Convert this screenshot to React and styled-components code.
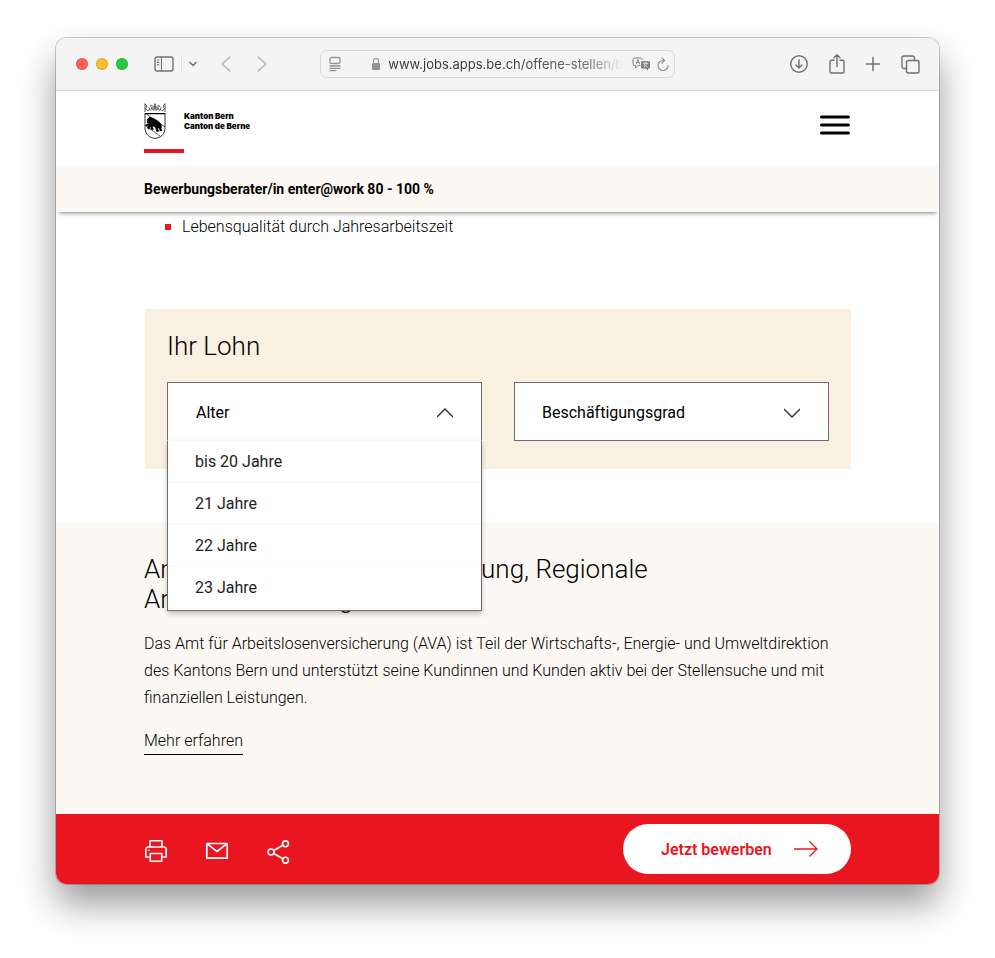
import React, { useState } from 'react'
import styled, { createGlobalStyle, css } from 'styled-components'

const GlobalStyle = createGlobalStyle`
  * {
    box-sizing: border-box;
  }

  body {
    margin: 0;
    background: #fff;
    color: #000;
    font-family: Roboto, "Liberation Sans", sans-serif;
    font-size: 16px;
  }

  button, select {
    font: inherit;
    color: inherit;
  }
`

const Desktop = styled.div`
  min-height: 100vh;
  padding: 38px 56px 74px;
`

const Window = styled.div`
  display: flex;
  flex-direction: column;
  min-height: calc(100vh - 112px);
  border-radius: 11px;
  overflow: hidden;
  background: #fff;
  box-shadow: 0 0 0 1px rgba(0, 0, 0, 0.2), 0 20px 36px rgba(0, 0, 0, 0.4);
`

const Toolbar = styled.div`
  display: flex;
  align-items: center;
  justify-content: space-between;
  height: 53px;
  padding: 0 19px 0 20px;
  background: #f4f4f4;
  border-bottom: 1px solid #d6d6d6;
  color: #707070;
`

const ToolGroup = styled.div`
  display: flex;
  align-items: center;
  gap: ${props => props.$gap}px;
`

const NavGroup = styled(ToolGroup)`
  margin-right: 30px;
`

const ActionGroup = styled(ToolGroup)`
  margin-left: 90px;
`

const Light = styled.button`
  width: 12px;
  height: 12px;
  padding: 0;
  border: 1px solid rgba(0, 0, 0, 0.12);
  border-radius: 50%;
  background: ${props => props.$color};
`

const IconButton = styled.button`
  display: flex;
  padding: 0;
  border: 0;
  background: none;
  color: ${props => props.$color || 'inherit'};
  cursor: pointer;

  svg {
    overflow: visible;
    fill: none;
    stroke: currentColor;
    stroke-linecap: round;
    stroke-linejoin: round;
  }
`

const SidebarButton = styled(IconButton)`
  margin-left: 18px;
`

const Divider = styled.span`
  width: 1px;
  height: 18px;
  background: #dedede;
`

const AddressBar = styled.div`
  display: flex;
  align-items: center;
  width: 355px;
  height: 28px;
  padding: 0 5px 0 8px;
  border: 1px solid #d8d8d8;
  border-radius: 7px;
  color: #939393;
`

const Lock = styled.svg`
  margin: 0 7px 0 30px;
  flex: none;
`

const Address = styled.input`
  flex: 1;
  min-width: 0;
  margin-right: 8px;
  padding: 0;
  border: 0;
  outline: 0;
  background: none;
  color: #3c3c3c;
  font: 13px Inter, "Liberation Sans", sans-serif;
  mask-image: linear-gradient(90deg, #000 50%, rgba(0, 0, 0, 0.7) 85%, transparent);
`

const SiteHeader = styled.header`
  display: flex;
  align-items: flex-start;
  justify-content: space-between;
  height: 75px;
  padding: 12px 88px 0;
`

const Brand = styled.a`
  display: flex;
  color: #000;
  text-decoration: none;
`

const Crest = styled.span`
  width: 40px;
  height: 50px;
  border-bottom: 4px solid #ea161f;
`

const BrandName = styled.span`
  padding-top: 8px;
  font: 900 8px/10px Inter, "Liberation Sans", sans-serif;
`

const MenuButton = styled(IconButton)`
  padding-top: 11px;
`

const JobBar = styled.div`
  position: relative;
  height: 46px;
  padding: 0 88px;
  background: #fcf8f3;
  box-shadow: 0 4px 4px -3px rgba(0, 0, 0, 0.5);
  font-size: 14px;
  font-weight: 700;
  line-height: 46px;
`

const Content = styled.main`
  flex: 1;
  display: flex;
  flex-direction: column;
`

const Benefits = styled.ul`
  margin: 0;
  padding: 1px 88px 0 109px;
  list-style: none;
  font-weight: 300;
  line-height: 27px;
`

const Benefit = styled.li`
  display: flex;
  align-items: center;
  gap: 11px;

  &::before {
    content: "";
    width: 6px;
    height: 6px;
    background: #ea161f;
  }
`

const Salary = styled.section`
  margin: 69px 88px 54px 89px;
  padding: 22px 22px 28px;
  background: #faf0e2;
`

const Heading = styled.h2`
  margin: 0;
  font-size: 26px;
  font-weight: 300;
  line-height: 30px;
`

const Fields = styled.div`
  display: grid;
  grid-template-columns: 1fr 1fr;
  gap: 32px;
  margin-top: 21px;
`

const Field = styled.div`
  position: relative;
  height: 59px;
`

const fieldControl = css`
  width: 100%;
  height: 59px;
  border: 1px solid #6d6d6d;
  border-radius: 0;
  background: #fff;
  font-weight: 400;
  text-align: left;
`

const Select = styled.select`
  ${fieldControl}
  appearance: none;
  padding: 2px 27px 0;
`

const Toggle = styled.button`
  ${fieldControl}
  padding: 2px 28px 0;
`

const Chevron = styled.svg`
  position: absolute;
  top: 25px;
  right: 29px;
  fill: none;
  stroke: #333;
  stroke-width: 1.4;
  pointer-events: none;
  transform: ${props => (props.$up ? 'rotate(180deg)' : 'none')};
`

const Options = styled.ul`
  position: absolute;
  z-index: 2;
  top: 58px;
  left: 0;
  right: 0;
  margin: 0;
  padding: 0 0 1px;
  list-style: none;
  background: #fff;
  border: 1px solid #6d6d6d;
  border-top-color: #f7f7f7;
  box-shadow: 0 3px 5px rgba(0, 0, 0, 0.22);
`

const Option = styled.li`
  height: 42px;
  padding: 0 27px;
  border-bottom: 1px solid #f7f7f7;
  color: #222;
  line-height: 42px;
`

const Office = styled.section`
  flex: 1;
  padding: 31px 88px;
  background: #fcf8f3;
`

const OfficeText = styled.p`
  margin: 16px 0;
  font-weight: 300;
  line-height: 27px;
`

const MoreLink = styled.a`
  display: inline-block;
  border-bottom: 1px solid #000;
  color: #000;
  font-weight: 300;
  line-height: 27px;
  text-decoration: none;
`

const ActionBar = styled.footer`
  display: flex;
  align-items: center;
  justify-content: space-between;
  height: 70px;
  padding: 0 88px;
  background: #ea161f;
  color: #fff;
`

const ShareTools = styled.div`
  display: flex;
  align-items: center;
  gap: 37px;
  padding-top: 4px;
`

const Apply = styled.a`
  display: flex;
  align-items: center;
  justify-content: space-between;
  width: 228px;
  height: 50px;
  padding: 0 32px 0 38px;
  border-radius: 25px;
  background: #fff;
  color: #ea161f;
  font-weight: 600;
  text-decoration: none;
`

const ages = ['bis 20 Jahre', '21 Jahre', '22 Jahre', '23 Jahre']

function BrowserToolbar() {
  return (
    <Toolbar>
      <ToolGroup $gap={8}>
        <Light $color="#ff5f57" aria-label="Schliessen" />
        <Light $color="#febc2e" aria-label="Minimieren" />
        <Light $color="#28c840" aria-label="Vergrössern" />
        <ToolGroup $gap={7}>
          <SidebarButton aria-label="Seitenleiste">
            <svg width="20" height="16" viewBox="0 0 20 16" strokeWidth="1.4">
              <rect x="1" y="1" width="18" height="14" rx="2" />
              <path d="M7.5 1v14M3.3 4h1.6M3.3 6.4h1.6M3.3 8.8h1.6" strokeWidth="1.1" />
            </svg>
          </SidebarButton>
          <Divider />
          <IconButton aria-label="Tabgruppen">
            <svg width="8" height="6" viewBox="0 0 8 6" strokeWidth="1.5"><path d="M1 1.5l3 3 3-3" /></svg>
          </IconButton>
        </ToolGroup>
      </ToolGroup>
      <NavGroup $gap={26}>
        <IconButton $color="#b3b3b3" aria-label="Zurück">
          <svg width="10" height="16" viewBox="0 0 10 16" strokeWidth="1.5"><path d="M9 1L1 8l8 7" /></svg>
        </IconButton>
        <IconButton $color="#b3b3b3" aria-label="Vorwärts">
          <svg width="10" height="16" viewBox="0 0 10 16" strokeWidth="1.5"><path d="M1 1l8 7-8 7" /></svg>
        </IconButton>
      </NavGroup>
      <AddressBar>
        <IconButton aria-label="Reader">
          <svg width="12" height="16" viewBox="0 0 12 16" strokeWidth="1.3">
            <rect x="1" y="1.5" width="10" height="6" rx="1.5" />
            <path d="M1 10h10M1 12.3h10M1 14.6h6" />
          </svg>
        </IconButton>
        <Lock width="10" height="14" viewBox="0 0 10 14">
          <path d="M2.5 7V4a2.5 2.5 0 0 1 5 0v3" fill="none" stroke="currentColor" strokeWidth="1.2" />
          <rect x="1" y="6" width="8" height="7" rx="1.2" fill="currentColor" />
        </Lock>
        <Address aria-label="Adresse" readOnly value="www.jobs.apps.be.ch/offene-stellen/bewerbungsberater" />
        <ToolGroup $gap={6}>
          <IconButton $color="#808080" aria-label="Übersetzen">
            <svg width="19" height="14" viewBox="0 0 19 14">
              <path d="M8 8.6H5.8L3.4 11V8.6H3A2 2 0 0 1 1 6.6V3a2 2 0 0 1 2-2h5.5a2 2 0 0 1 1.9 1.6" strokeWidth="1" />
              <path d="M4 7l1.9-4.6L7.6 7M4.6 5.6h2.5" strokeWidth="0.9" />
              <path d="M10.5 4h6A1.5 1.5 0 0 1 18 5.5V10a1.5 1.5 0 0 1-1.5 1.5H16v2l-2.2-2h-3.3A1.5 1.5 0 0 1 9 10V5.5A1.5 1.5 0 0 1 10.5 4z" fill="#808080" stroke="none" />
              <path d="M11.3 6.2h4.6M13.6 5.3v.9M12 9.8c1.7-.8 2.6-2 2.8-3.6M12.3 7.4c.6 1.2 1.7 2 3 2.4" stroke="#f4f4f4" strokeWidth="0.8" />
            </svg>
          </IconButton>
          <IconButton aria-label="Neu laden">
            <svg width="12" height="15" viewBox="0 0 12 15" strokeWidth="1.2">
              <path d="M7 3.5H6a5 5 0 1 0 5 5M5 1l2.5 2.5L5 6" />
            </svg>
          </IconButton>
        </ToolGroup>
      </AddressBar>
      <ActionGroup $gap={20}>
        <IconButton aria-label="Downloads">
          <svg width="20" height="20" viewBox="0 0 20 20" strokeWidth="1.4">
            <circle cx="10" cy="10" r="8.3" />
            <path d="M10 5.8v8M7 10.9l3 3 3-3" />
          </svg>
        </IconButton>
        <IconButton aria-label="Teilen">
          <svg width="16" height="20" viewBox="0 0 16 20" strokeWidth="1.4">
            <path d="M5 6.3H2.5A1.5 1.5 0 0 0 1 7.8v9.7A1.5 1.5 0 0 0 2.5 19h11a1.5 1.5 0 0 0 1.5-1.5V7.8a1.5 1.5 0 0 0-1.5-1.5H11M8 12.5V1M5 3.7L8 .8l3 2.9" />
          </svg>
        </IconButton>
        <IconButton aria-label="Neuer Tab">
          <svg width="16" height="16" viewBox="0 0 16 16" strokeWidth="1.5"><path d="M8 1.5v13M1.5 8h13" /></svg>
        </IconButton>
        <IconButton aria-label="Tabübersicht">
          <svg width="19" height="19" viewBox="0 0 19 19" strokeWidth="1.4">
            <rect x="5.5" y="5.5" width="12.5" height="12.5" rx="2" />
            <path d="M5.5 13.5H3a2 2 0 0 1-2-2V3a2 2 0 0 1 2-2h8.5a2 2 0 0 1 2 2v2.5" />
          </svg>
        </IconButton>
      </ActionGroup>
    </Toolbar>
  )
}

function BernCrest() {
  return (
    <svg width="22" height="36" viewBox="-1 0 66 108" fill="none" stroke="#000" strokeWidth="2.6" aria-hidden="true">
      <path d="M2 27V2l5 6v6l-3 3 5 6 7-3-2-7M18 23l5-9-5-5 4-2 5 4-2 9 4 2 3-20 3 20 4-2-2-9 5-4 4 2-5 5 5 9M50 13l-2 7 7 3 5-6-3-3V8l5-6v25" strokeWidth="2" />
      <path d="M1 32h62" strokeWidth="4" />
      <path d="M2 32v42c0 20 13 31 30 32 17-1 30-12 30-32V32" strokeWidth="2.4" />
      <path d="M7 34l55 38M2 66l46 34" strokeWidth="2" />
      {/* bear walking up the diagonal band */}
      <path d="M9 49l5-4 3-3 3 3 6 1 9 5 8 5 6 7 2 8-1 7 3 5h-6l-1-5-5-6-1 7 3 6h-6l-3-12-9-5-1 5 3 6h-6l-2-9-5 4 1 4-4-1-1-4 5-5-5-1-3 3-2-3 4-4 6-1-1-3-4 1z" fill="#000" stroke="#000" />
    </svg>
  )
}

function SalaryForm() {
  const [open, setOpen] = useState(true)

  return (
    <Salary>
      <Heading>Ihr Lohn</Heading>
      <Fields>
        <Field>
          <Toggle type="button" aria-haspopup="listbox" aria-expanded={open} aria-controls="alter-liste" onClick={() => setOpen(!open)}>
            Alter
          </Toggle>
          <Chevron $up={open} width="16" height="12" viewBox="0 0 16 12"><path d="M0 2l8 8 8-8" /></Chevron>
          {open && (
            <Options id="alter-liste" role="listbox" aria-label="Alter">
              {ages.map(age => <Option key={age} role="option" aria-selected="false">{age}</Option>)}
            </Options>
          )}
        </Field>
        <Field>
          <Select aria-label="Beschäftigungsgrad" defaultValue="">
            <option value="">Beschäftigungsgrad</option>
          </Select>
          <Chevron width="16" height="12" viewBox="0 0 16 12"><path d="M0 2l8 8 8-8" /></Chevron>
        </Field>
      </Fields>
    </Salary>
  )
}

function App() {
  return (
    <Desktop>
      <GlobalStyle />
      <Window>
        <BrowserToolbar />
        <SiteHeader>
          <Brand href="#">
            <Crest><BernCrest /></Crest>
            <BrandName>Kanton Bern<br />Canton de Berne</BrandName>
          </Brand>
          <MenuButton $color="#000" aria-label="Menü">
            <svg width="32" height="22" viewBox="0 0 32 22" strokeWidth="3"><path d="M2.5 3h27M2.5 11h27M2.5 19h27" /></svg>
          </MenuButton>
        </SiteHeader>
        <JobBar>Bewerbungsberater/in enter@work 80 - 100 %</JobBar>
        <Content>
          <Benefits>
            <Benefit>Lebensqualität durch Jahresarbeitszeit</Benefit>
          </Benefits>
          <SalaryForm />
          <Office>
            <Heading>Amt für Arbeitslosenversicherung, Regionale Arbeitsvermittlung</Heading>
            <OfficeText>
              Das Amt für Arbeitslosenversicherung (AVA) ist Teil der Wirtschafts-, Energie- und Umweltdirektion
              des Kantons Bern und unterstützt seine Kundinnen und Kunden aktiv bei der Stellensuche und mit
              finanziellen Leistungen.
            </OfficeText>
            <MoreLink href="#">Mehr erfahren</MoreLink>
          </Office>
        </Content>
        <ActionBar>
          <ShareTools>
            <IconButton aria-label="Drucken">
              <svg width="24" height="24" viewBox="0 0 24 24" strokeWidth="1.6">
                <path d="M6 8V1.8h12V8M6 18H1.8V9.5L3.3 8h17.4l1.5 1.5V18H18M6.3 14.5h11.4v7.7H6.3zM4.8 11.2h.2" />
              </svg>
            </IconButton>
            <IconButton aria-label="E-Mail">
              <svg width="24" height="24" viewBox="0 0 24 24" strokeWidth="1.7">
                <path d="M1.8 4.5h20.4v14.7H1.8zM2 4.7l10 7.8 10-7.8" />
              </svg>
            </IconButton>
            <IconButton aria-label="Teilen">
              <svg width="24" height="24" viewBox="-1 -1 24 24" strokeWidth="1.6">
                <circle cx="4" cy="12" r="3" />
                <circle cx="18.5" cy="3.8" r="2.9" />
                <circle cx="18.5" cy="20.2" r="2.9" />
                <path d="M6.7 10.5l9.2-5.2M6.7 13.5l9.2 5.2" />
              </svg>
            </IconButton>
          </ShareTools>
          <Apply href="#">
            Jetzt bewerben
            <svg width="26" height="18" viewBox="0 0 26 18" fill="none" stroke="currentColor" strokeWidth="1.3"><path d="M1 9h23M16.5 1.5L24 9l-7.5 7.5" /></svg>
          </Apply>
        </ActionBar>
      </Window>
    </Desktop>
  )
}

export default App
